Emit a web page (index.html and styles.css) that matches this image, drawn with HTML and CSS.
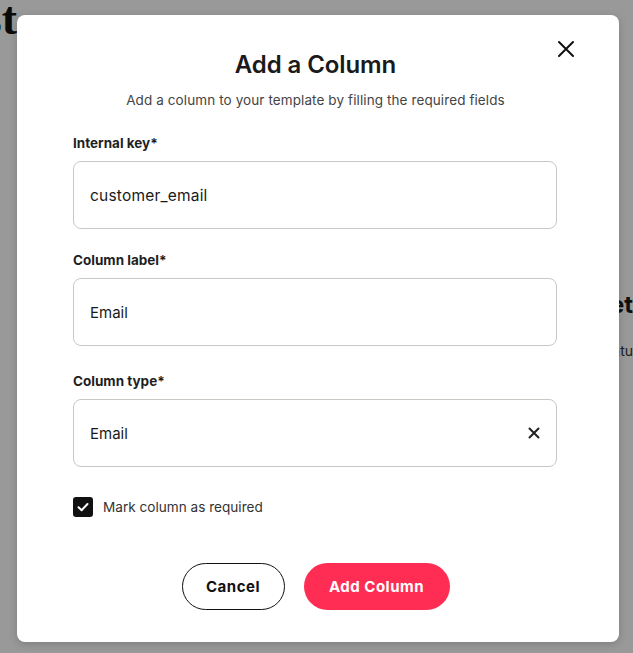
FILE: index.html
```html
<!DOCTYPE html>
<html>
<head>
<meta charset="utf-8">
<link rel="stylesheet" href="styles.css">
</head>
<body>
<div class="page">
  <h1 class="page-title">List</h1>
  <div class="page-side">
    <h2 class="side-title">Get</h2>
    <p class="side-text">Statu</p>
  </div>
</div>
<div class="overlay"></div>
<div class="modal">
  <button class="close" aria-label="Close">
    <svg width="18" height="18" viewBox="0 0 18 18"><path d="M2 2L16 16M16 2L2 16" stroke="#111" stroke-width="2" stroke-linecap="round"/></svg>
  </button>
  <h2 class="title">Add a Column</h2>
  <p class="subtitle">Add a column to your template by filling the required fields</p>
  <form class="form">
    <div class="field f1">
      <label class="label">Internal key*</label>
      <div class="input input-key">customer_email</div>
    </div>
    <div class="field f2">
      <label class="label">Column label*</label>
      <div class="input">Email</div>
    </div>
    <div class="field f3">
      <label class="label">Column type*</label>
      <div class="input select"><span>Email</span>
        <svg class="clear" width="12" height="12" viewBox="0 0 12 12"><path d="M1.5 1.5L10.5 10.5M10.5 1.5L1.5 10.5" stroke="#222" stroke-width="2" stroke-linecap="round"/></svg>
      </div>
    </div>
    <div class="check-row">
      <span class="checkbox"><svg width="14" height="14" viewBox="0 0 14 14"><path d="M2.5 7.2L5.6 10.2L11.5 4" stroke="#fff" stroke-width="2" fill="none" stroke-linecap="round" stroke-linejoin="round"/></svg></span>
      <span class="check-label">Mark column as required</span>
    </div>
    <div class="actions">
      <button type="button" class="btn btn-cancel">Cancel</button>
      <button type="button" class="btn btn-add">Add Column</button>
    </div>
  </form>
</div>
</body>
</html>
```

FILE: styles.css
```css
* { box-sizing: border-box; }
html, body { margin: 0; padding: 0; }
body {
  width: 633px;
  height: 653px;
  overflow: hidden;
  background: #fff;
  font-family: Inter, "Noto Sans", sans-serif;
  position: relative;
}
.page { position: relative; height: 653px; }
.page-title {
  position: absolute;
  right: 616px;
  top: -4px;
  margin: 0;
  font-family: "Liberation Serif", serif;
  font-size: 46px;
  line-height: 46px;
  font-weight: 700;
  color: #111;
  white-space: nowrap;
}
.page-side { position: absolute; right: 0; top: 290px; text-align: right; }
.side-title { margin: 0; font-size: 24px; font-weight: 700; color: #1a1a1a; }
.side-text { margin: 23px 0 0; font-size: 14px; color: #333; }
.overlay {
  position: absolute;
  inset: 0;
  background: rgba(0,0,0,0.4);
}
.modal {
  position: absolute;
  left: 17px;
  top: 15px;
  width: 602px;
  height: 627px;
  background: #fff;
  border-radius: 8px;
  box-shadow: 0 2px 8px rgba(0,0,0,0.18);
  padding: 35px 0 0 56px;
}
.close {
  position: absolute;
  left: 540px;
  top: 25px;
  width: 18px;
  height: 18px;
  padding: 0;
  border: 0;
  background: none;
  display: flex;
}
.title {
  margin: 0;
  width: 485px;
  text-align: center;
  font-size: 24px;
  line-height: 30px;
  font-weight: 600;
  color: #1a1a1a;
  letter-spacing: -0.1px;
}
.subtitle {
  margin: 11px 0 0;
  width: 485px;
  text-align: center;
  font-size: 13.5px;
  line-height: 18px;
  color: #444;
  letter-spacing: 0.1px;
}
.form { width: 484px; margin-top: 25px; display: flex; flex-direction: column; }
.field { display: flex; flex-direction: column; }
.f2 { margin-top: 22px; }
.f3 { margin-top: 26px; }
.label {
  font-size: 13.5px;
  line-height: 18px;
  font-weight: 700;
  color: #1f1f1f;
  margin-bottom: 9px;
}
.input {
  height: 68px;
  border: 1px solid #cbc7c3;
  border-radius: 8px;
  padding: 0 16px;
  display: flex;
  align-items: center;
  font-size: 15px;
  color: #1a1a1a;
}
.input-key { font-size: 15.5px; letter-spacing: 0.2px; }
.select { justify-content: space-between; padding-right: 16px; }
.check-row { margin-top: 30px; display: flex; align-items: center; gap: 10px; }
.checkbox {
  width: 20px;
  height: 20px;
  background: #111;
  border-radius: 3px;
  display: flex;
  align-items: center;
  justify-content: center;
}
.check-label { font-size: 13.6px; color: #333; }
.actions {
  margin-top: 46px;
  display: flex;
  justify-content: center;
  gap: 19px;
  padding-left: 1px;
}
.btn {
  height: 47px;
  border-radius: 24px;
  font-family: Inter, "Noto Sans", sans-serif;
  font-size: 15px;
  font-weight: 700;
  letter-spacing: 0.5px;
  cursor: pointer;
}
.btn-cancel {
  width: 103px;
  background: #fff;
  border: 1px solid #111;
  color: #111;
}
.btn-add {
  width: 146px;
  background: #ff2d53;
  border: 0;
  color: #fff;
}
```
